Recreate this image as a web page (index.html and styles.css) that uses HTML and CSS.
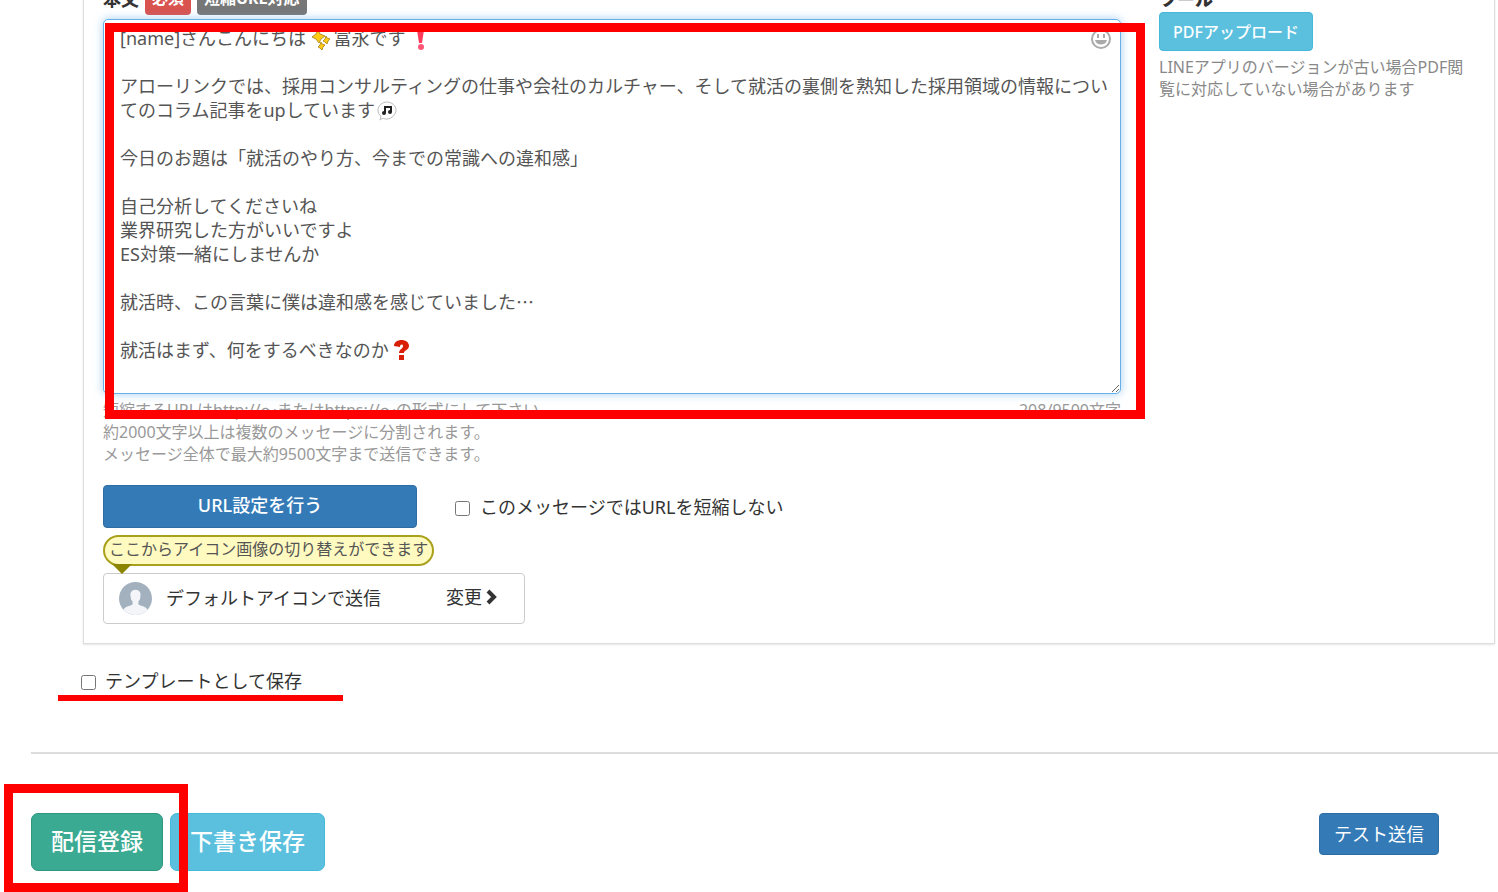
FILE: index.html
```html
<!DOCTYPE html>
<html lang="ja">
<head>
    <meta charset="UTF-8">
    <meta name="viewport" content="width=device-width, initial-scale=1.0">
    <title>メッセージ配信</title>
    <link rel="stylesheet" href="styles.css">
</head>
<body>
    <main class="page">
        <section class="card">
            <div class="message-col">
                <div class="label-row">
                    <label for="message">本文</label>
                    <span class="badge required">必須</span>
                    <span class="badge short-url">短縮URL対応</span>
                </div>
                <div class="message-field">
                    <textarea id="message" class="message" spellcheck="false">[name]さんこんにちは 　 冨永です

アローリンクでは、採用コンサルティングの仕事や会社のカルチャー、そして就活の裏側を熟知した採用領域の情報についてのコラム記事をupしています

今日のお題は「就活のやり方、今までの常識への違和感」

自己分析してくださいね
業界研究した方がいいですよ
ES対策一緒にしませんか

就活時、この言葉に僕は違和感を感じていました⋯

就活はまず、何をするべきなのか</textarea>
                    <svg class="emoji sparkle" viewBox="0 0 20 20" aria-hidden="true">
                        <g fill="#fc1" stroke="#b8912a" stroke-width="1">
                            <path d="M7 0l2 4 5 2-4 3-2 4-3-4-4-2 4-3z"/>
                            <path d="M15 6l1 2 3 1-2 2-1 3-2-2-2-1 2-2z"/>
                            <path d="M10 12l1 2 3 1-2 2-1 3-2-2-2-1 2-2z"/>
                        </g>
                    </svg>
                    <svg class="emoji exclaim" viewBox="0 0 20 20" aria-hidden="true">
                        <path d="M6 0h7l-2 13H8z" fill="#ff3b5c"/>
                        <circle cx="10" cy="17" r="3" fill="#ff5577"/>
                    </svg>
                    <svg class="emoji music" viewBox="0 0 20 20" aria-hidden="true">
                        <path d="M10 1c5 0 9 4 9 8s-4 9-9 9c-2 0-3 0-4-1l-3 2 1-4C2 14 1 12 1 9c0-4 4-8 9-8z" fill="#fff" stroke="#bbb"/>
                        <path d="M8 12V6h6v5" fill="none" stroke="#222" stroke-width="2"/>
                        <circle cx="7" cy="12" r="2" fill="#222"/>
                        <circle cx="13" cy="11" r="2" fill="#222"/>
                    </svg>
                    <svg class="emoji question" viewBox="0 0 20 20" aria-hidden="true">
                        <path d="M3 6C3-2 18-2 18 6c0 4-5 4-5 7H8c0-4 4-4 4-7 0-2-3-2-3 1z" fill="#d81e06"/>
                        <path d="M8 15h5v5H8z" fill="#d81e06"/>
                    </svg>
                    <button type="button" class="emoji-button" aria-label="絵文字">
                        <svg viewBox="0 0 22 22" aria-hidden="true">
                            <circle cx="11" cy="11" r="9" fill="none" stroke="#aaa" stroke-width="2"/>
                            <path d="M8 6v4M14 6v4" stroke="#aaa" stroke-width="2"/>
                            <path d="M5 12h12c-1 6-11 6-12 0z" fill="#aaa"/>
                        </svg>
                    </button>
                    <span class="mark-box mark-message"></span>
                </div>
                <div class="help-row">
                    <p class="help">短縮するURLはhttp://～またはhttps://～の形式にして下さい<br>約2000文字以上は複数のメッセージに分割されます。<br>メッセージ全体で最大約9500文字まで送信できます。</p>
                    <span class="help">208/9500文字</span>
                </div>
                <div class="url-row">
                    <button type="button" class="btn btn-primary btn-url">URL設定を行う</button>
                    <label class="check"><input type="checkbox">このメッセージではURLを短縮しない</label>
                </div>
                <div class="balloon">ここからアイコン画像の切り替えができます</div>
                <button type="button" class="sender">
                    <svg class="avatar" viewBox="0 0 34 34" aria-hidden="true">
                        <defs><clipPath id="round"><circle cx="17" cy="17" r="17"/></clipPath></defs>
                        <g clip-path="url(#round)">
                            <rect width="34" height="34" fill="#a3b1bf"/>
                            <path d="M17 8c4 0 6 3 5 7 0 3-1 4-2 5v3c2 2 9 2 10 7l-4 4H8l-4-4c1-5 8-5 10-7v-3c-1-1-2-2-2-5-1-4 1-7 5-7z" fill="#f3f5f9"/>
                        </g>
                    </svg>
                    <span class="sender-name">デフォルトアイコンで送信</span>
                    <span class="sender-change">変更</span>
                    <svg class="chevron" viewBox="0 0 14 16" aria-hidden="true">
                        <path d="M3 2l6 6-6 6" fill="none" stroke="#333" stroke-width="4"/>
                    </svg>
                </button>
            </div>
            <aside class="tool-col">
                <div class="label-row"><strong>ツール</strong></div>
                <button type="button" class="btn btn-info btn-pdf">PDFアップロード</button>
                <p class="help tool-help">LINEアプリのバージョンが古い場合PDF閲覧に対応していない場合があります</p>
            </aside>
        </section>

        <div class="template-row">
            <label class="check"><input type="checkbox">テンプレートとして保存</label>
            <span class="mark-line"></span>
        </div>

        <hr>

        <div class="actions">
            <button type="button" class="btn btn-lg btn-info">下書き保存</button>
            <div class="submit">
                <button type="button" class="btn btn-lg btn-success">配信登録</button>
                <span class="mark-box mark-submit"></span>
            </div>
            <button type="button" class="btn btn-primary btn-test">テスト送信</button>
        </div>
    </main>
</body>
</html>
```
FILE: styles.css
```css
* {
    box-sizing: border-box;
}
html {
    overflow: hidden;
}
body {
    margin: 0;
    background-color: #fff;
    color: #333;
    font-family: "Noto Sans", "Noto Sans CJK JP", sans-serif;
    font-size: 18px;
    line-height: 24px;
}
button, textarea {
    font-family: inherit;
}
p {
    margin: 0;
}
.page {
    margin-top: -24px;
    padding-left: 31px;
}
.card {
    display: flex;
    gap: 38px;
    margin: 0 3px 0 52px;
    padding: 0 19px 19px;
    border: 1px solid #ddd;
    border-top: 0;
    box-shadow: 0 1px 2px rgba(0, 0, 0, 0.1);
}
.message-col {
    flex: 1;
    min-width: 0;
}
.tool-col {
    width: 316px;
}

/* labels */
.label-row {
    display: flex;
    align-items: flex-end;
    height: 43px;
    padding-bottom: 4px;
    font-weight: bold;
}
.label-row label {
    padding-bottom: 4px;
}
.tool-col .label-row {
    height: 36px;
    padding-bottom: 1px;
}
.badge {
    margin-left: 6px;
    padding: 1px 7px 5px;
    border-radius: 4px;
    color: #fff;
    font-size: 16px;
}
.required {
    background-color: #d9534f;
}
.short-url {
    background-color: #777;
}

/* message box */
.message-field {
    position: relative;
}
.message {
    display: block;
    width: 100%;
    height: 375px;
    padding: 6px 9px 6px 16px;
    border: 1px solid #66afe9;
    border-radius: 5px;
    outline: 0;
    overflow: hidden;
    resize: vertical;
    color: #555;
    font-size: 18px;
    line-height: 24px;
    box-shadow: 0 0 10px rgba(102, 175, 233, 0.6);
}
.emoji {
    position: absolute;
    width: 20px;
    height: 20px;
}
.sparkle {
    left: 208px;
    top: 11px;
}
.exclaim {
    left: 308px;
    top: 11px;
}
.music {
    left: 274px;
    top: 82px;
}
.question {
    left: 288px;
    top: 321px;
}
.emoji-button {
    position: absolute;
    top: 9px;
    right: 9px;
    width: 22px;
    height: 22px;
    padding: 0;
    border: 0;
    background: none;
}
.mark-box {
    position: absolute;
    border: 9px solid #f00;
    pointer-events: none;
}
.mark-message {
    top: 4px;
    right: -24px;
    bottom: -25px;
    left: 2px;
}

/* help text */
.help {
    color: #999;
    font-size: 16px;
    line-height: 22px;
}
.help-row {
    display: flex;
    justify-content: space-between;
    padding-top: 5px;
}
.tool-help {
    margin-top: 5px;
    color: #888;
}

/* buttons */
.btn {
    border: 1px solid;
    border-radius: 4px;
    color: #fff;
    font-size: 18px;
    line-height: 24px;
}
.btn-primary {
    background-color: #337ab7;
    border-color: #2e6da4;
}
.btn-info {
    background-color: #5bc0de;
    border-color: #46b8da;
}
.btn-success {
    background-color: #3aaa92;
    border-color: #2f967f;
}
.btn-url {
    width: 314px;
    height: 43px;
    padding-bottom: 4px;
    font-weight: 500;
}
.btn-pdf {
    height: 39px;
    padding: 0 13px;
    font-size: 16px;
    font-weight: 500;
}
.btn-lg {
    height: 58px;
    padding: 0 19px 2px;
    border-radius: 7px;
    font-size: 23px;
    font-weight: 500;
}
.btn-test {
    height: 42px;
    margin-left: auto;
    padding: 0 14px;
}
.url-row {
    display: flex;
    align-items: center;
    gap: 38px;
    padding-top: 20px;
}
.check {
    display: flex;
    align-items: center;
    gap: 10px;
}
.check input {
    width: 15px;
    height: 15px;
    margin: 3px 0 0;
}

/* sender icon */
.balloon {
    position: relative;
    width: fit-content;
    margin-top: 7px;
    padding: 1px 4px 4px;
    border: 2px solid #a9a11c;
    border-radius: 16px;
    background-color: #fffac0;
    color: #555;
    font-size: 16px;
    line-height: 22px;
}
.balloon::after {
    content: "";
    position: absolute;
    top: 100%;
    left: 7px;
    border: 10px solid transparent;
    border-top-color: #8c8500;
    border-bottom: 0;
}
.sender {
    display: flex;
    align-items: center;
    width: 422px;
    height: 51px;
    margin-top: 7px;
    padding: 0 25px 0 15px;
    border: 1px solid #ccc;
    border-radius: 4px;
    background: #fff;
    color: #333;
    font-size: 18px;
}
.avatar {
    width: 33px;
    height: 33px;
}
.sender-name {
    margin: 0 auto 0 14px;
    padding-bottom: 4px;
}
.sender-change {
    padding-bottom: 6px;
}
.chevron {
    width: 14px;
    height: 16px;
    margin: 0 0 4px 3px;
}

/* footer */
.template-row {
    position: relative;
    margin-left: 50px;
    padding-top: 25px;
}
.template-row .check {
    gap: 9px;
}
.mark-line {
    position: absolute;
    left: -23px;
    top: 51px;
    width: 285px;
    height: 6px;
    background-color: #f00;
}
hr {
    height: 2px;
    margin: 59px 0 0;
    border: 0;
    background-color: #ddd;
}
.actions {
    display: flex;
    align-items: flex-start;
    gap: 7px;
    padding: 59px 59px 21px 0;
}
.submit {
    position: relative;
    order: -1;
}
.mark-submit {
    top: -29px;
    right: -25px;
    bottom: -21px;
    left: -27px;
}
```
